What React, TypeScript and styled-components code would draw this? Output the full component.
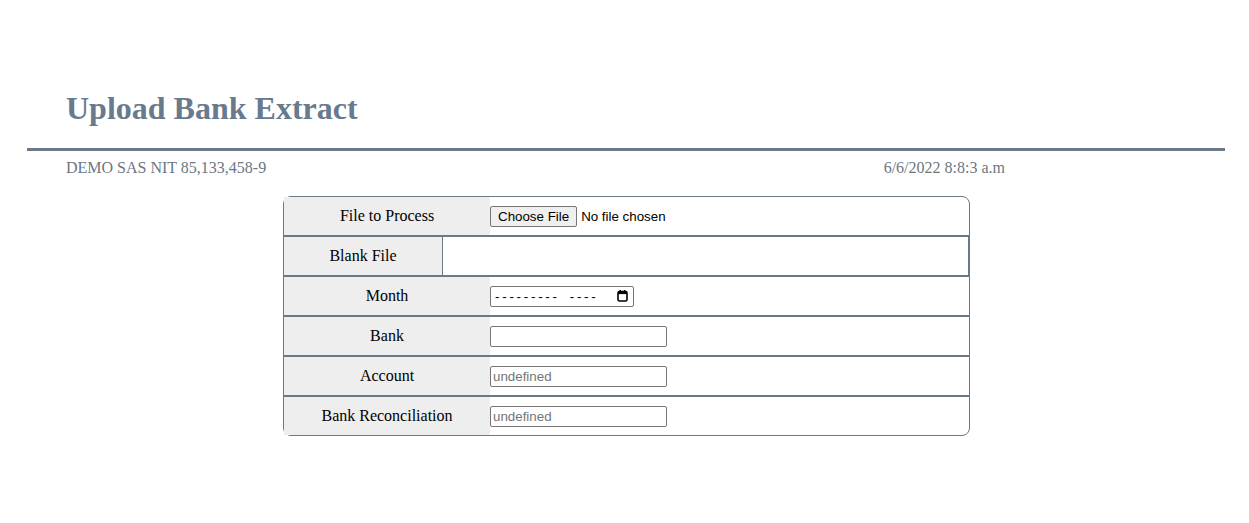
import React from "react";
import styled, { createGlobalStyle } from "styled-components";

const GlobalStyle = createGlobalStyle`
  html, body {
    margin: 0;
    padding: 0;
    background: #ffffff;
    font-family: "Liberation Serif", "Times New Roman", serif;
  }
`;

const Page = styled.div`
  width: 1249px;
  padding-top: 90px;
`;

const Title = styled.h1`
  margin: 0 0 0 66px;
  font-family: "Liberation Serif", "Times New Roman", serif;
  font-size: 32px;
  font-weight: bold;
  line-height: 37px;
  height: 37px;
  color: #687a8d;
`;

const Rule = styled.div`
  margin: 21px 24px 0 27px;
  height: 3px;
  background: #6b7887;
`;

const InfoBar = styled.div`
  display: flex;
  justify-content: space-between;
  margin: 8px 0 0 0;
  padding: 0 244px 0 66px;
  font-size: 16px;
  line-height: 18px;
  color: #6e7681;
`;

const FormBox = styled.div`
  box-sizing: border-box;
  width: 687px;
  margin: 19px 0 0 283px;
  border: 1px solid #6b7887;
  border-radius: 8px;
`;

const Row = styled.div<{ $label: number; $boxed?: boolean; $last?: boolean }>`
  display: grid;
  grid-template-columns: ${(p) => p.$label}px 1fr;
  height: 38px;
  border-bottom: ${(p) => (p.$last ? "none" : "2px solid #6b7887")};
  box-shadow: ${(p) => (p.$boxed ? "inset -1px 0 0 #6b7887" : "none")};
`;

const Label = styled.div<{ $divider?: boolean }>`
  display: flex;
  align-items: center;
  justify-content: center;
  background: #eeeeee;
  font-size: 16px;
  color: #000;
  border-right: ${(p) => (p.$divider ? "1px solid #6b7887" : "none")};
`;

const Value = styled.div`
  display: flex;
  align-items: center;
`;

const FileInput = styled.input`
  font-family: "Liberation Sans", Arial, sans-serif;
  font-size: 13.333px;
  color: #000;
  &::file-selector-button {
    font-family: "Liberation Sans", Arial, sans-serif;
    font-size: 13.333px;
    height: 21px;
    padding: 1px 7px;
    margin-right: 4px;
    background: #efefef;
    border: 1px solid #767676;
    border-radius: 2px;
    color: #000;
  }
`;

const TextInput = styled.input<{ $w: number }>`
  box-sizing: border-box;
  width: ${(p) => p.$w}px;
  height: 21px;
  padding: 1px 2px;
  border: 1px solid #767676;
  border-radius: 2px;
  font-family: "Liberation Sans", Arial, sans-serif;
  font-size: 13.333px;
  color: #000;
  background: #fff;
  &::placeholder {
    color: #757575;
  }
`;

const MonthField = styled.label`
  box-sizing: border-box;
  display: flex;
  align-items: center;
  width: 144px;
  height: 21px;
  padding: 0 5px 0 4px;
  border: 1px solid #767676;
  border-radius: 2px;
  background: #fff;
  font-family: "Liberation Sans", Arial, sans-serif;
  font-size: 13.333px;
  color: #000;
  cursor: text;
`;

const Dashes = styled.span<{ $gap?: number }>`
  letter-spacing: 2.75px;
  margin-left: ${(p) => p.$gap ?? 0}px;
  white-space: pre;
`;

const CalendarIcon = styled.svg`
  margin-left: auto;
  width: 11px;
  height: 12px;
  flex: none;
`;

export default function App() {
  return (
    <>
      <GlobalStyle />
      <Page>
        <Title>Upload Bank Extract</Title>
        <Rule />
        <InfoBar>
          <span>DEMO SAS NIT 85,133,458-9</span>
          <span>6/6/2022 8:8:3 a.m</span>
        </InfoBar>
        <FormBox>
          <Row $label={206}>
            <Label>File to Process</Label>
            <Value>
              <FileInput type="file" />
            </Value>
          </Row>
          <Row $label={159} $boxed>
            <Label $divider>Blank File</Label>
            <Value />
          </Row>
          <Row $label={206}>
            <Label>Month</Label>
            <Value>
              <MonthField>
                <Dashes>---------</Dashes>
                <Dashes $gap={10}>----</Dashes>
                <CalendarIcon viewBox="0 0 11 12" aria-hidden="true">
                  <rect x="1" y="1.5" width="9" height="9.5" rx="1.5" fill="none" stroke="#000" strokeWidth="1.6" />
                  <rect x="1" y="1.5" width="9" height="2.6" fill="#000" />
                  <rect x="2.5" y="0" width="1.5" height="2" fill="#000" />
                  <rect x="7" y="0" width="1.5" height="2" fill="#000" />
                </CalendarIcon>
              </MonthField>
            </Value>
          </Row>
          <Row $label={206}>
            <Label>Bank</Label>
            <Value>
              <TextInput type="text" $w={177} />
            </Value>
          </Row>
          <Row $label={206}>
            <Label>Account</Label>
            <Value>
              <TextInput type="text" $w={177} placeholder="undefined" />
            </Value>
          </Row>
          <Row $label={206} $last>
            <Label>Bank Reconciliation</Label>
            <Value>
              <TextInput type="text" $w={177} placeholder="undefined" />
            </Value>
          </Row>
        </FormBox>
      </Page>
    </>
  );
}
